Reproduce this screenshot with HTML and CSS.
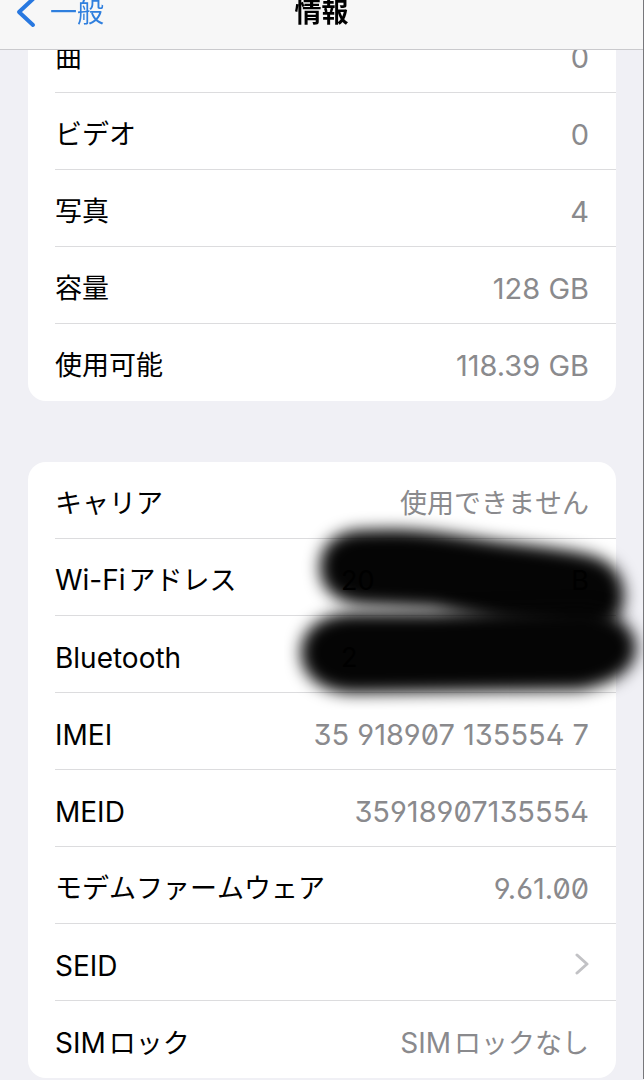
FILE: index.html
```html
<!DOCTYPE html>
<html lang="ja">
<head>
    <meta charset="UTF-8">
    <meta name="viewport" content="width=device-width, initial-scale=1.0">
    <title>情報</title>
    <link rel="stylesheet" href="styles.css">
</head>
<body>
    <header class="navbar">
        <a class="back" href="#general">
            <svg class="back-icon" viewBox="0 0 20 32" aria-hidden="true"><path d="M17 3 3 16l14 13"/></svg>
            <span>一般</span>
        </a>
        <h1>情報</h1>
    </header>
    <main class="content">
        <dl class="group">
            <div class="row"><dt>曲</dt><dd class="number">0</dd></div>
            <div class="row"><dt>ビデオ</dt><dd class="number">0</dd></div>
            <div class="row"><dt>写真</dt><dd class="number">4</dd></div>
            <div class="row"><dt>容量</dt><dd class="number">128 GB</dd></div>
            <div class="row"><dt>使用可能</dt><dd class="number">118.39 GB</dd></div>
        </dl>
        <dl class="group">
            <div class="row"><dt>キャリア</dt><dd>使用できません</dd></div>
            <div class="row"><dt><span class="latin mixed">Wi-Fi</span>アドレス</dt><dd class="hidden-value"><span>20</span><span>B</span></dd></div>
            <div class="row"><dt class="latin">Bluetooth</dt><dd class="hidden-value"><span>2</span></dd></div>
            <div class="row"><dt class="latin">IMEI</dt><dd class="number code">35 918907 135554 7</dd></div>
            <div class="row"><dt class="latin">MEID</dt><dd class="number code">35918907135554</dd></div>
            <div class="row"><dt>モデムファームウェア</dt><dd class="number code">9.61.00</dd></div>
            <div class="row">
                <dt class="latin"><a href="#seid">SEID</a></dt>
                <dd><svg class="chevron" viewBox="0 0 14 22" aria-hidden="true"><path d="M2 2l10 9-10 9"/></svg></dd>
            </div>
            <div class="row"><dt><span class="latin mixed">SIM</span>ロック</dt><dd><span class="latin mixed">SIM</span>ロックなし</dd></div>
            <!-- marker strokes over the two addresses -->
            <svg class="marker" viewBox="0 0 360 200" aria-hidden="true">
                <defs>
                    <filter id="soft" x="-20%" y="-40%" width="140%" height="180%" color-interpolation-filters="sRGB">
                        <feGaussianBlur stdDeviation="8"/>
                    </filter>
                </defs>
                <path filter="url(#soft)" d="M36 58C36 33 54 20 82 20C140 17 180 27 220 32C260 37 290 40 310 46C333 54 341 70 340 90C338 110 320 120 300 120L220 112L150 98L82 95C54 94 36 80 36 58Z"/>
                <path filter="url(#soft)" d="M17 143C17 119 38 103 70 103L150 103L220 100L300 98C332 101 353 118 352 139C351 160 330 174 295 180L70 183C38 183 17 166 17 143Z"/>
            </svg>
        </dl>
    </main>
</body>
</html>
```
FILE: styles.css
```css
* {
    box-sizing: border-box;
}
body {
    margin: 0;
    background: #f0f0f5;
    border-right: 1px solid #77777b;
    color: #000;
    font-family: Inter, "Noto Sans CJK JP", sans-serif;
    font-size: 27px;
    font-kerning: none;
    line-height: 40px;
}
a {
    color: inherit;
    text-decoration: none;
}
.navbar {
    position: fixed;
    top: 0;
    left: 0;
    right: 1px;
    z-index: 2;
    display: grid;
    grid-template-columns: 1fr auto 1fr;
    align-items: start;
    height: 50px;
    padding: 0 16px;
    background: #f7f7f7;
    border-bottom: 1px solid #cacacd;
    line-height: 26px;
}
.back {
    display: flex;
    gap: 14px;
    color: #2f7fde;
}
.back-icon {
    width: 20px;
    height: 32px;
    margin-top: -4px;
    fill: none;
    stroke: #2878e0;
    stroke-width: 4;
    stroke-linecap: round;
    stroke-linejoin: round;
}
.navbar h1 {
    margin: 0;
    font-size: 27px;
    font-weight: 700;
}
.content {
    padding: 16px 27px 1px 28px;
}
.group {
    position: relative;
    margin: 0 0 61px;
    background: #fff;
    border-radius: 18px;
}
.group:last-child {
    margin-bottom: 0;
}
.row {
    display: flex;
    justify-content: space-between;
    align-items: center;
    height: 77px;
    margin-left: 27px;
    padding: 7px 27px 0 0;
    border-bottom: 1px solid #dcdcde;
}
.row:last-of-type {
    border-bottom: none;
}
.row dd {
    margin: 0;
    color: #8a8a8d;
}
.latin {
    font-size: 28px;
    font-kerning: normal;
}
.mixed {
    margin-right: 3px;
}
.row .number {
    font-size: 29px;
    font-kerning: normal;
}
.row .code {
    font-feature-settings: "zero", "ss01";
}
.row .hidden-value {
    position: relative;
    z-index: 1;
    display: flex;
    justify-content: space-between;
    width: 248px;
    color: #000;
}
.chevron {
    display: block;
    width: 14px;
    height: 22px;
    margin-bottom: 4px;
    fill: none;
    stroke: #c2c2c5;
    stroke-width: 3;
    stroke-linecap: round;
    stroke-linejoin: round;
}
.marker {
    position: absolute;
    top: 48px;
    right: -28px;
    width: 360px;
    height: 200px;
    fill: #050505;
    pointer-events: none;
}
```
